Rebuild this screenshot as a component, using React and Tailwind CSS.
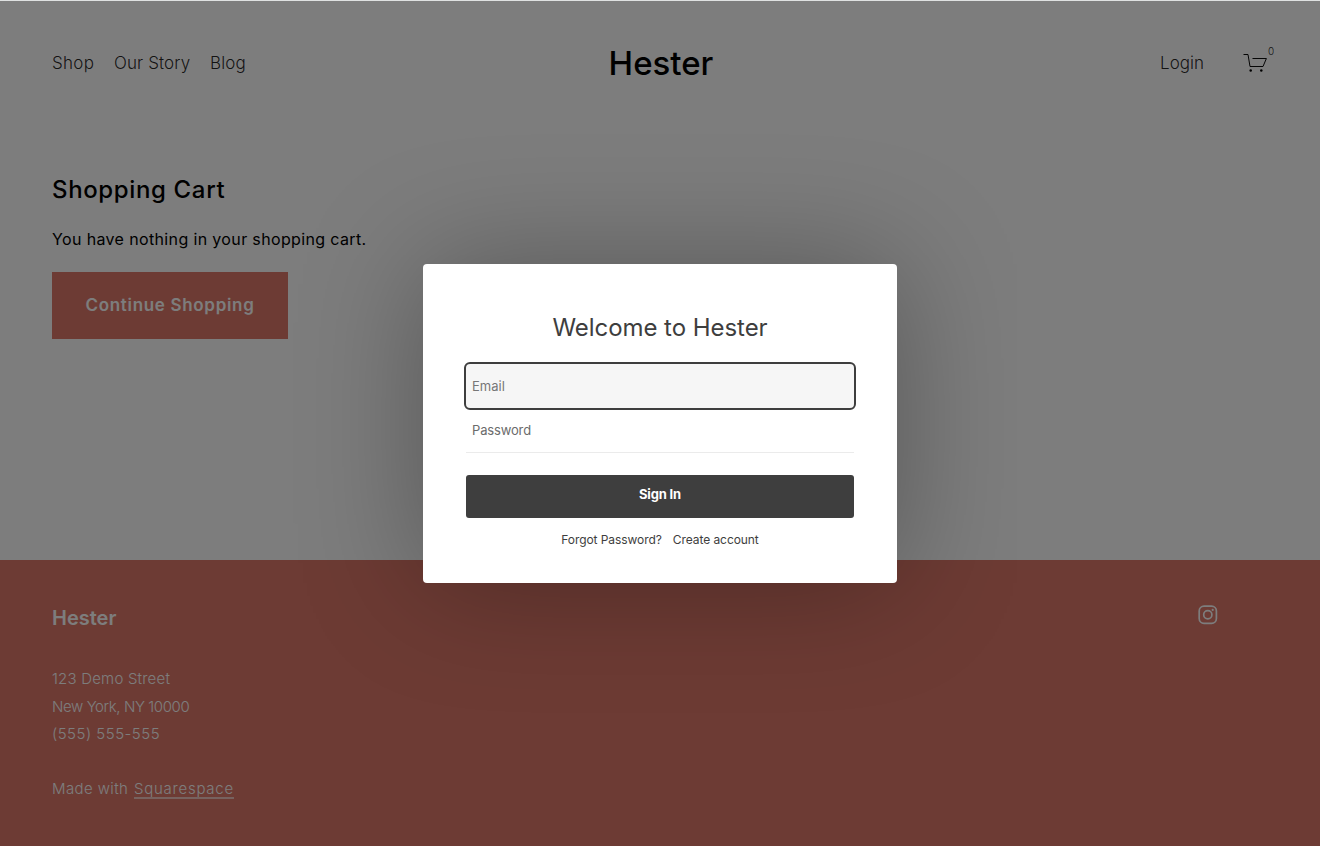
function CartIcon() {
  return (
    <svg width="26" height="20" viewBox="0 0 26 20" fill="none" stroke="#000" strokeWidth="0.95">
      <path d="M0.5 1.5H5L7 13.5H20L23.4 5.5H9.5" />
      <circle cx="7.7" cy="17.5" r="1.25" fill="#000" stroke="none" />
      <circle cx="18.3" cy="17.5" r="1.25" fill="#000" stroke="none" />
    </svg>
  );
}

function InstagramIcon() {
  return (
    <svg width="20" height="20" viewBox="0 0 20 20" fill="none" stroke="#fff" strokeWidth="1.7">
      <rect x="1.2" y="1.2" width="17.2" height="17.2" rx="4.8" />
      <circle cx="9.8" cy="9.8" r="4.1" />
      <circle cx="14.7" cy="4.9" r="1.1" fill="#fff" stroke="none" />
    </svg>
  );
}

function Header() {
  return (
    <header className="grid h-[126px] grid-cols-3 items-center pr-[50px] pl-[52px] text-black">
      <nav className="flex gap-5 text-[17px] font-light leading-7 text-black/85">
        <a className="w-[42px] whitespace-nowrap tracking-[0.3px]">Shop</a>
        <a className="w-[76px] whitespace-nowrap tracking-[0.1px]">Our Story</a>
        <a className="whitespace-nowrap tracking-[0.1px]">Blog</a>
      </nav>
      <div className="text-center text-[33px] font-medium leading-10">Hester</div>
      <div className="flex items-center justify-end text-[17px] font-light leading-7 text-black/85">
        <a className="mr-[39px]">Login</a>
        <CartIcon />
        <span className="mr-[-4px] mb-[25px] ml-[-1px] w-[6px] text-[10px] leading-3">0</span>
      </div>
    </header>
  );
}

function Cart() {
  return (
    <main className="flex h-[434px] flex-col items-start px-[52px] pt-12 text-black">
      <h1 className="text-[24px] font-medium leading-8 tracking-[0.64px]">Shopping Cart</h1>
      <p className="mt-[21px] text-[16px] leading-6 tracking-[0.36px]">You have nothing in your shopping cart.</p>
      <button className="mt-[21px] h-[67px] w-[236px] bg-[#de786a] text-[17px] font-semibold tracking-[0.68px] text-white">
        Continue Shopping
      </button>
    </main>
  );
}

function Footer() {
  return (
    <footer className="flex h-[286px] items-start justify-between bg-[#de786a] pr-[102px] pl-[52px] text-white">
      <div className="pt-11 text-[15px] leading-[27.5px] font-[350]">
        <h2 className="mb-[33px] text-[20px] font-semibold leading-7">Hester</h2>
        <p className="tracking-[0.2px]">123 Demo Street</p>
        <p className="tracking-[-0.4px]">New York, NY 10000</p>
        <p className="tracking-[0.5px]">(555) 555-555</p>
        <p className="mt-[27px] flex items-baseline tracking-[0.4px]">
          <span className="w-[82px] whitespace-nowrap">Made with</span>
          <a className="border-b-2 border-white/60 leading-[16px] tracking-[0.75px]">Squarespace</a>
        </p>
      </div>
      <div className="pt-[45px]"><InstagramIcon /></div>
    </footer>
  );
}

function SignIn() {
  return (
    <form className="flex h-[319px] w-[474px] flex-col rounded-[4px] bg-white px-[43px] pt-12 text-[#3e3e3e] shadow-[0_0_125px_rgba(0,0,0,0.3)]">
      <h2 className="text-center text-[24px] leading-8 tracking-[-0.05px]">Welcome to Hester</h2>
      <div className="mx-[-2px] mt-[18px] flex h-12 items-center rounded-[6px] border-2 border-[#3e3e3e] bg-[#f6f6f6] px-[6px] pt-[2px] text-[13px] text-[#777]">Email</div>
      <div className="flex h-[43px] items-center border-b border-[#ebebeb] px-[6px] text-[13px] tracking-[-0.15px] text-[#6b6b6b]">Password</div>
      <div className="mt-[22px] flex h-[43px] items-center justify-center rounded-[3px] bg-[#3e3e3e] pb-[3px] text-[13px] font-bold tracking-[-0.15px] text-white">Sign In</div>
      <div className="mt-[14px] flex justify-center gap-[11px] text-[12px] leading-4 tracking-[-0.07px]">
        <a>Forgot Password?</a>
        <a>Create account</a>
      </div>
    </form>
  );
}

export default function App() {
  return (
    <div className="relative h-[846px] w-[1320px] overflow-hidden bg-white font-['Inter',sans-serif]">
      <Header />
      <Cart />
      <Footer />
      <div className="absolute inset-0 flex items-start justify-center border-t border-[#dfe1e1] bg-black/51 pt-[263px]">
        <SignIn />
      </div>
    </div>
  );
}
